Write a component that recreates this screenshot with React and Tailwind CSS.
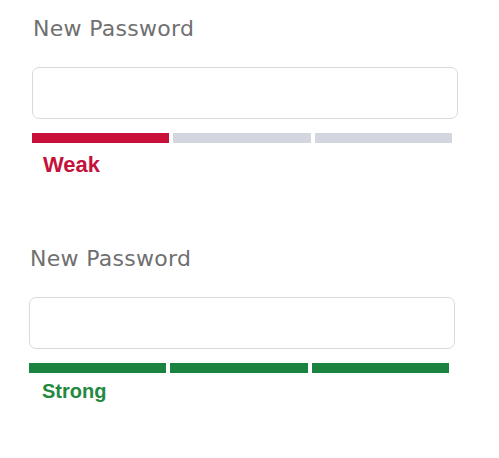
import React from "react";

const Meter = ({ label, level, color, textColor, textSize, textPad, textGap, shift }) => {
  return (
    <div className={`flex flex-col ${shift}`}>
      <label className="text-[22px] leading-[26px] tracking-[0.3px] font-normal text-[#707070] pl-[1px] [font-family:'DejaVu_Sans',sans-serif]">
        New Password
      </label>
      <input
        type="password"
        className="mt-[25px] h-[52px] w-[426px] rounded-[7px] border border-[#dadada] bg-white outline-none"
      />
      <div className="mt-[14px] flex w-[420px] gap-[4px]">
        {[0, 1, 2].map((i) => (
          <div
            key={i}
            className={`h-[10px] flex-1 ${i < level ? color : "bg-[#d3d5df]"}`}
          />
        ))}
      </div>
      <span className={`${textGap} ${textPad} ${textSize} font-bold ${textColor} [font-family:'Liberation_Sans',Arial,sans-serif]`}>
        {label}
      </span>
    </div>
  );
};

export default function App() {
  return (
    <div className="w-[499px] h-[458px] bg-white pt-4">
      <Meter
        label="Weak"
        level={1}
        color="bg-[#c8103a]"
        textColor="text-[#c4123c]"
        textSize="text-[22px] leading-[26px]"
        textPad="pl-[11px]"
        textGap="mt-[9px]"
        shift="ml-[32px]"
      />
      <div className="mt-[68px]">
        <Meter
          label="Strong"
          level={3}
          color="bg-[#1b8340]"
          textColor="text-[#23893f]"
          textSize="text-[20px] leading-[24px]"
          textPad="pl-[13px]"
          textGap="mt-[6px]"
          shift="ml-[29px]"
        />
      </div>
    </div>
  );
}
